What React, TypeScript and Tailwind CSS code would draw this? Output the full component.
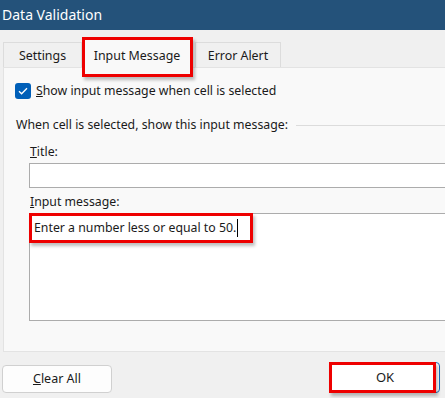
import React from "react";

const font = { fontFamily: '"Noto Sans", "Open Sans", Arial, sans-serif' };

function RedBox({ className }: { className: string }) {
  return (
    <div
      className={`absolute pointer-events-none border-[3px] border-[#ee0000] shadow-[2px_3px_3px_rgba(0,0,0,0.25)] ${className}`}
    />
  );
}

export default function App() {
  return (
    <div
      className="relative w-[445px] h-[398px] overflow-hidden bg-[#f0f0f0] text-[#1a1a1a]"
      style={font}
    >
      {/* Title bar */}
      <div className="h-[30px] bg-[#24527a] text-white text-[14px] leading-[30px] pl-[2px]">
        Data Validation
      </div>

      {/* Tabs */}
      <div className="relative flex items-end h-[37px] pl-[3px] text-[12.4px]">
        <div className="w-[79px] h-[25px] border border-b-0 border-[#dcdcdc] bg-[#f0f0f0] flex items-center justify-center pt-[3px]">
          Settings
        </div>
        <div className="relative z-10 w-[110px] h-[31px] -mb-px border border-b-0 border-[#dcdcdc] bg-[#f9f9f9] flex items-center justify-center pt-[6px]">
          Input Message
          <RedBox className="left-[-1px] top-[-1px] w-[111px] h-[40px]" />
        </div>
        <div className="w-[86px] h-[25px] ml-[3px] border border-b-0 border-[#dcdcdc] bg-[#f0f0f0] flex items-center justify-center pt-[3px]">
          Error Alert
        </div>
      </div>

      {/* Panel */}
      <div className="ml-[3px] w-[460px] h-[285px] border border-[#e3e3e3] bg-[#f9f9f9] text-[12.3px]">
        <div className="flex items-center pl-[11px] pt-[15px] gap-[5px] h-[31px]">
          <div className="w-[16px] h-[16px] rounded-[3px] bg-[#005fb8] flex items-center justify-center">
            <svg width="10" height="8" viewBox="0 0 10 8" fill="none">
              <path d="M1 4.2 L3.6 6.8 L9 1.2" stroke="white" strokeWidth="1.3" />
            </svg>
          </div>
          <span className="leading-[16px]">
            <span className="underline">S</span>how input message when cell is selected
          </span>
        </div>

        <div className="flex items-center mt-[18px] pl-[12px] h-[16px]">
          <span className="leading-[16px]">When cell is selected, show this input message:</span>
          <div className="flex-1 ml-[8px] border-t border-[#dcdcdc]" />
        </div>

        <div className="pl-[25px]">
          <div className="mt-[11px] h-[16px] leading-[16px] pl-[1px]">
            <span className="underline">T</span>itle:
          </div>
          <div className="mt-[3px] w-[430px] h-[25px] border border-[#acacac] bg-white" />

          <div className="mt-[6px] h-[16px] leading-[16px] pl-[1px]">
            <span className="underline">I</span>nput message:
          </div>
          <div className="relative mt-[3px] w-[430px] h-[108px] border border-[#acacac] bg-white">
            <div className="flex items-center pl-[4px] pt-[5px] h-[22px] leading-[16px]">
              <span>Enter a number less or equal to 50.</span>
              <span className="ml-[1px] w-px h-[18px] bg-black" />
            </div>
            <RedBox className="left-[-1px] top-[-1px] w-[224px] h-[30px]" />
          </div>
        </div>
      </div>

      {/* Buttons */}
      <div className="flex items-end justify-between mt-[10px] pl-[2px] pr-[5px] text-[12.5px]">
        <div className="w-[110px] h-[28px] rounded-[4px] border border-[#d0d0d0] bg-[#fdfdfd] flex items-center justify-center">
          <span>
            <span className="underline">C</span>lear All
          </span>
        </div>
        <div className="relative w-[111px] h-[31px] rounded-[4px] border border-[#1a6fc0] bg-white flex items-center justify-center">
          <span className="pl-[1px] text-[13px]">OK</span>
          <RedBox className="left-[-1px] top-[-1px] w-[107px] h-[31px]" />
        </div>
      </div>
    </div>
  );
}
